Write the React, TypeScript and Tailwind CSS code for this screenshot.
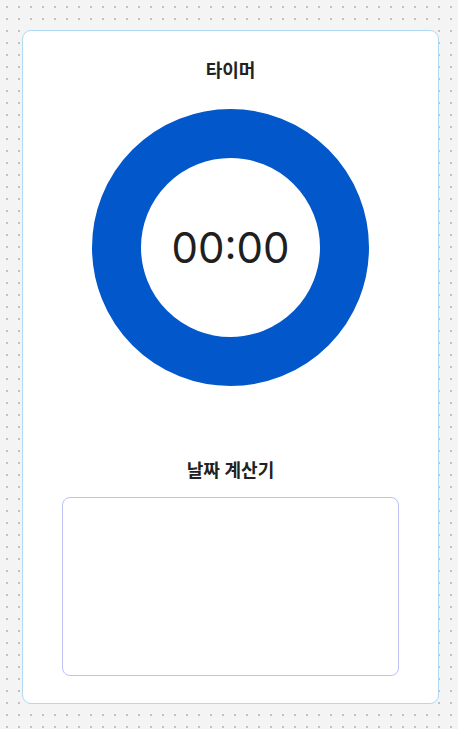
export default function App() {
    return (
        <div
            className="min-h-screen w-full bg-[#f4f4f4] bg-[radial-gradient(circle,#c2c2c2_0.8px,transparent_1px)] bg-[size:12px_12px] bg-[position:1px_1px] pt-[30px] pb-[26px]"
            style={{ fontFamily: '"Noto Sans", "Noto Sans CJK KR", sans-serif' }}
        >
            <div className="ml-[22px] w-[417px] h-[674px] bg-white border border-[#b0d9f3] rounded-[9px] flex flex-col items-center pt-[26px]">
                {/* Timer */}
                <h2 className="text-[18px] leading-[27px] font-bold text-[#222]">타이머</h2>
                <div className="mt-[25px] w-[277px] h-[277px] rounded-full border-[49px] border-[#0258cb] flex items-center justify-center">
                    <span className="text-[42px] leading-none text-[#1f1f1f]" style={{ fontFamily: 'Inter, "Noto Sans", sans-serif' }}>
                        00:00
                    </span>
                </div>

                {/* Date calculator */}
                <h2 className="mt-[71px] text-[18px] leading-[27px] font-bold text-[#222]">날짜 계산기</h2>
                <div className="mt-[13px] w-[337px] h-[179px] border border-[#bcc2f2] rounded-[8px]" />
            </div>
        </div>
    );
}
